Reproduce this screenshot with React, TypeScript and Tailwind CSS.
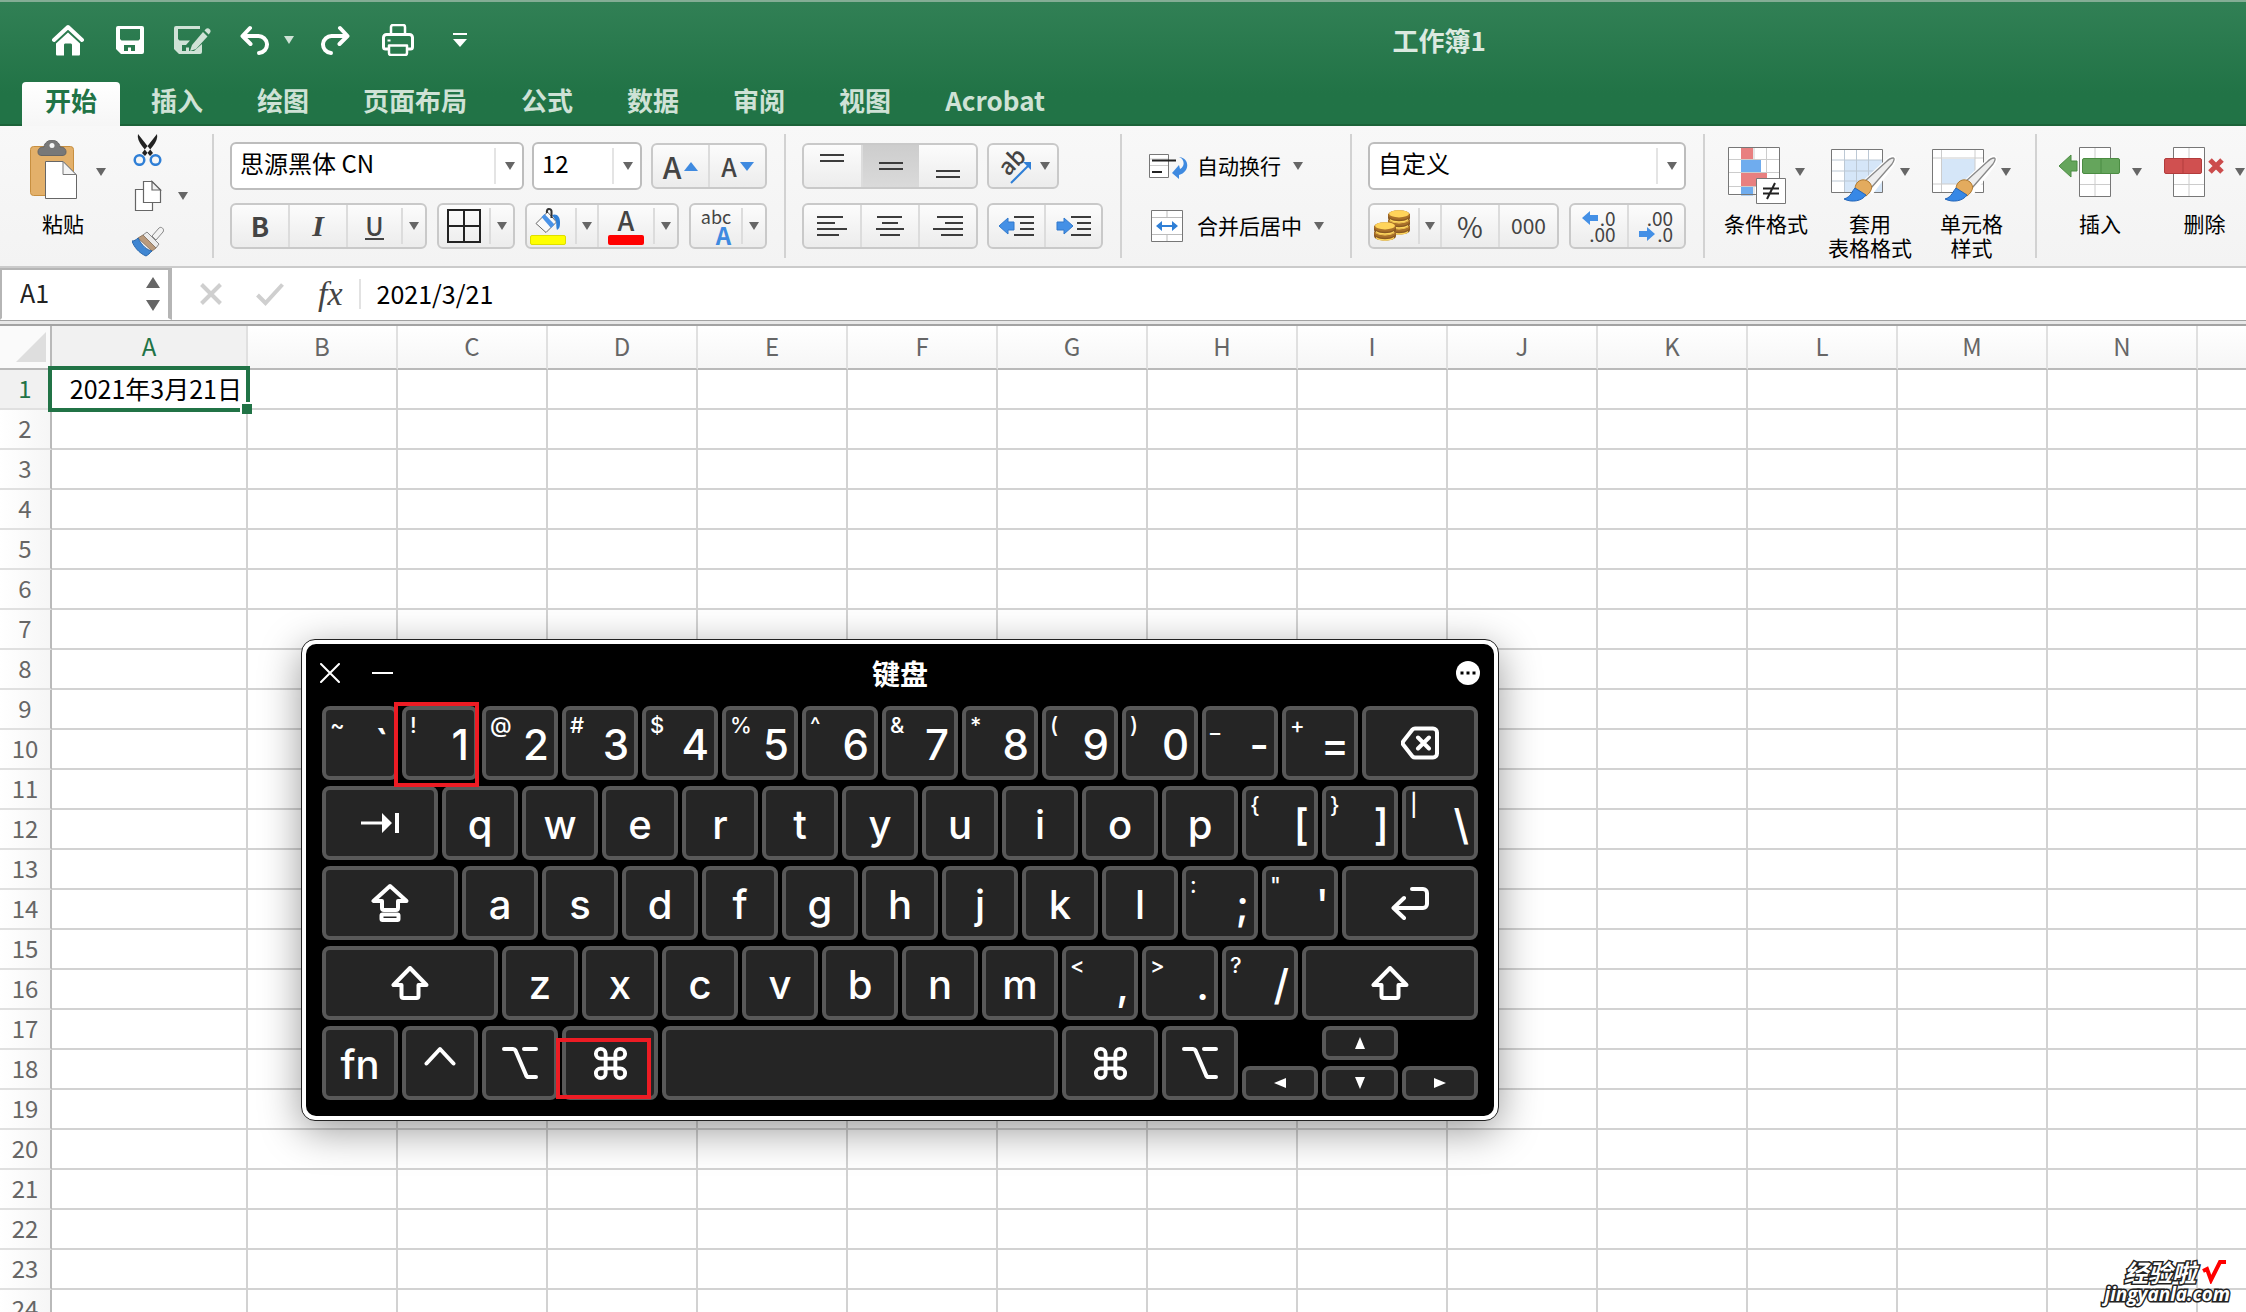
import type { ReactNode } from 'react'
import { Command } from 'lucide-react'
import clsx from 'clsx'

const COLUMNS = ['A', 'B', 'C', 'D', 'E', 'F', 'G', 'H', 'I', 'J', 'K', 'L', 'M', 'N', 'O']
const ROWS = Array.from({ length: 24 }, (_, i) => i + 1)
const TABS = ['开始', '插入', '绘图', '页面布局', '公式', '数据', '审阅', '视图', 'Acrobat']

/* ---------- small shared pieces ---------- */

const Caret = ({ className = 'text-[#666]' }: { className?: string }) => (
  <svg width="10" height="8" viewBox="0 0 10 8" className={clsx('shrink-0', className)} aria-hidden="true">
    <path d="M0 0h10L5 8z" fill="currentColor" />
  </svg>
)

const Separator = () => <span className="my-2 w-[2px] shrink-0 bg-[#d2d2d2]" />

const ButtonGroup = ({ className, children }: { className: string; children: ReactNode }) => (
  <div
    className={clsx(
      'flex h-[46px] shrink-0 rounded-md border-2 border-[#c9c9c9] bg-linear-to-b from-[#fcfcfc] to-[#ececec]',
      className,
    )}
  >
    {children}
  </div>
)

type ToolProps = { label: string; className?: string; divided?: boolean; children: ReactNode }

const Tool = ({ label, className = 'flex-1', divided, children }: ToolProps) => (
  <button
    aria-label={label}
    className={clsx(
      'flex h-full items-center justify-center text-[#444]',
      divided && 'border-r-2 border-[#dcdcdc]',
      className,
    )}
  >
    {children}
  </button>
)

// Narrow arrow part of a split button
const MenuArrow = ({ label, divided }: { label: string; divided?: boolean }) => (
  <button
    aria-label={label}
    className={clsx('flex h-full w-6 shrink-0 items-center', divided && 'border-r-2 border-[#dcdcdc]')}
  >
    <span className="flex h-9 w-full items-center justify-center border-l-2 border-[#dcdcdc]">
      <Caret />
    </span>
  </button>
)

const Picker = ({ label, value, className }: { label: string; value: string; className: string }) => (
  <div className={clsx('relative h-12 shrink-0', className)}>
    <select
      aria-label={label}
      defaultValue={value}
      className="h-full w-full appearance-none rounded-md border-2 border-[#bdbdbd] bg-white pb-[6px] pl-2 text-2xl text-black"
    >
      <option>{value}</option>
    </select>
    <span className="pointer-events-none absolute inset-y-[6px] right-0 flex w-[30px] items-center justify-center border-l-2 border-[#e4e4e4]">
      <Caret />
    </span>
  </div>
)

const BigTool = ({ lines, icon }: { lines: string[]; icon: ReactNode }) => (
  <button className="flex shrink-0 flex-col items-center pt-[14px] text-[21px] leading-6 text-black">
    <span className="flex items-center gap-2">
      {icon}
      <Caret />
    </span>
    <span className="mt-[7px] block">
      {lines.map((line) => (
        <span key={line} className="block whitespace-nowrap">
          {line}
        </span>
      ))}
    </span>
  </button>
)

/* ---------- title bar ---------- */

const QuickAccess = () => (
  <div className="flex w-[62%] items-center pl-[52px]">
    <button aria-label="主页">
      <svg width="32" height="32" viewBox="0 0 32 32" fill="none">
        <path d="M2 16L16 3l14 13" stroke="#fff" strokeWidth="4" strokeLinecap="round" strokeLinejoin="round" />
        <path d="M4 19.500L16 8.500l12 11V30c0 1-.5 1.500-1.500 1.500H20V21c0-1-.7-1.500-1.500-1.500h-5c-.8 0-1.500.5-1.500 1.500v10.500H5.500C4.500 31.500 4 31 4 30z" fill="#fff" />
      </svg>
    </button>
    <button aria-label="保存" className="ml-8">
      <svg width="28" height="28" viewBox="0 0 28 28">
        <path fillRule="evenodd" d="M2 0h24a2 2 0 0 1 2 2v24a2 2 0 0 1-2 2H5l-5-5V2a2 2 0 0 1 2-2zm2 3v10l1.500 1.500h17L24 13V3zm4 16v6h4v-3.500h3V25h4v-6z" fill="#fff" />
      </svg>
    </button>
    <button aria-label="另存为" className="ml-[30px]">
      <svg width="37" height="28" viewBox="0 0 37 28" className="text-[#cfe2d6]">
        <path fillRule="evenodd" d="M2 0h24v3H4v10l1.500 1.500H16L12 19H8v6h4v-3.500h3V25h5l8-7v8a2 2 0 0 1-2 2H5l-5-5V2a2 2 0 0 1 2-2z" fill="currentColor" />
        <path d="M18 19L29 6l4.500 4.500L22 23l-6 2z" fill="currentColor" />
        <path d="M30.500 4.500l1.500-1.700c2.500-2 6 1.500 4 4L34.700 8.500z" fill="currentColor" />
      </svg>
    </button>
    <button aria-label="撤消" className="ml-[29px]">
      <svg width="30" height="30" viewBox="0 0 30 30" fill="none" stroke="#fff" strokeWidth="4" strokeLinecap="round" strokeLinejoin="round">
        <path d="M10 3L2.500 11l8 8M3 11h15a8.500 8.500 0 0 1 1 17" />
      </svg>
    </button>
    <button aria-label="撤消选项" className="ml-[14px]">
      <Caret className="text-[#cfe2d6]" />
    </button>
    <button aria-label="恢复" className="ml-[26px]">
      <svg width="30" height="30" viewBox="0 0 30 30" fill="none" stroke="#fff" strokeWidth="4" strokeLinecap="round" strokeLinejoin="round">
        <path d="M20 3l7.500 8-8 8M27 11H12a8.500 8.500 0 0 0-1 17" />
      </svg>
    </button>
    <button aria-label="打印" className="ml-8">
      <svg width="32" height="32" viewBox="0 0 32 32" fill="none" stroke="#fff" strokeLinejoin="round">
        <path d="M9 11V3a2 2 0 0 1 2-2h10a2 2 0 0 1 2 2v8" strokeWidth="2.500" />
        <path d="M6 25H3.500A2 2 0 0 1 1.500 23V13.500a3 3 0 0 1 3-3h23a3 3 0 0 1 3 3V23a2 2 0 0 1-2 2H26" strokeWidth="3" />
        <path d="M7 21.500h18V29a2 2 0 0 1-2 2H9a2 2 0 0 1-2-2z" strokeWidth="2.500" />
        <path d="M5.500 15.500h3v2h-3z" fill="#fff" stroke="none" />
      </svg>
    </button>
    <button aria-label="自定义快速访问工具栏" className="ml-[39px]">
      <svg width="14" height="14" viewBox="0 0 14 14" fill="#fff">
        <path d="M0 0h14v2H0zM0 6h14l-7 8z" />
      </svg>
    </button>
  </div>
)

const TitleBar = () => (
  <header className="shrink-0 border-t-2 border-b-2 border-t-[#84ad95] border-b-[#1c6339] bg-linear-to-b from-[#318055] via-[#217346] via-75% to-[#217346]">
    <div className="flex h-[76px] items-center">
      <QuickAccess />
      <h1 className="text-[26px] leading-8 font-bold text-[#dbe9e0]">工作簿1</h1>
    </div>
    <nav className="mt-1 -mb-[2px] flex gap-2 pl-[22px]">
      {TABS.map((tab, i) => (
        <button
          key={tab}
          className={clsx(
            'h-11 rounded-t px-[23px] pb-2 text-[26px] leading-9 font-bold whitespace-nowrap',
            i === 0 ? 'bg-linear-to-b from-white to-[#f6f6f6] text-[#217346]' : 'text-[#cfe2d6]',
          )}
        >
          {tab}
        </button>
      ))}
    </nav>
  </header>
)

/* ---------- ribbon icons ---------- */

const PasteIcon = () => (
  <svg width="68" height="64" viewBox="0 0 68 64">
    <rect x="10.500" y="6.500" width="43" height="49" rx="3" fill="#e3b06a" stroke="#c78f40" />
    <path d="M18 12c0-4 3-5 6-5 1-9 15-9 16 0 3 0 6 1 6 5 0 3-2 3.500-4 3.500H22c-2 0-4-.5-4-3.500z" fill="#787878" stroke="#666" />
    <circle cx="32" cy="5.500" r="2.500" fill="#f5f5f5" />
    <path d="M25.500 21.500H43L56.500 35v23.500h-31z" fill="#fff" stroke="#666" />
    <path d="M43 21.500V34.500h13z" fill="#f4f4f4" stroke="#777" />
  </svg>
)

const CutIcon = () => (
  <svg width="32" height="32" viewBox="0 0 32 32" fill="none">
    <path d="M6 0c-1 4 1 8 4 12l8 10 3-3zM25 0c1 4-1 8-4 12l-8 10-3-3z" fill="#222" />
    <ellipse cx="7.500" cy="26" rx="4.800" ry="4.800" stroke="#2f7fd6" strokeWidth="2.500" />
    <ellipse cx="23.500" cy="26" rx="4.800" ry="4.800" stroke="#2f7fd6" strokeWidth="2.500" />
  </svg>
)

const CopyIcon = () => (
  <svg width="32" height="32" viewBox="0 0 32 32" fill="#fff" stroke="#666" strokeWidth="1.200">
    <path d="M3.500 9.500h17v21h-17z" />
    <path d="M11.500 1.500H20L28.500 10v12.500h-17z" />
    <path d="M20 1.500V10h8.500z" fill="#f1f1f1" />
  </svg>
)

const FormatPainterIcon = () => (
  <svg width="32" height="32" viewBox="0 0 32 32">
    <path d="M20 10l7-8c2-2 6 1 4 4l-7 8z" fill="#f2f2f2" stroke="#888" />
    <path d="M11 9l4-3 12 12-3 4z" fill="#ececec" stroke="#888" />
    <path d="M11 9l13 13-4 3L6 12z" fill="#b99a7c" stroke="#8f7a66" />
    <path d="M6 12c-2 2-4 3-6 3 2 6 7 12 14 15 2-1 4-3 6-5-5-1-10-5-14-13z" fill="#3f86d2" stroke="#2a67ab" />
  </svg>
)

const BordersIcon = () => (
  <svg width="34" height="34" viewBox="0 0 34 34" fill="none" stroke="#222" strokeWidth="2">
    <path d="M1 1h32v32H1zM17 1v32M1 17h32" />
  </svg>
)

const FillIcon = () => (
  <svg width="36" height="38" viewBox="0 0 36 38">
    <path d="M6 16.500L17.500 5 26.500 15 16 25.500z" fill="#fafafa" stroke="#666" />
    <path d="M11.500 10l3-3 10 10.500-3.500 3.500z" fill="#4a93e8" />
    <path d="M22 8c5-2 8 2 8 7 0 4 0 6-3 8-1-3-.5-6-1-9z" fill="#2f7fd6" />
    <path d="M17 6c-1-5 4-5 4.500-2v7" fill="none" stroke="#333" strokeWidth="2" />
    <rect x=".5" y="28.500" width="35" height="9" rx="1.500" fill="#ff0" stroke="#dede00" />
  </svg>
)

const FontColorIcon = () => (
  <span className="flex flex-col items-center">
    <span className="h-7 text-[27px] leading-[25px] font-medium">A</span>
    <span className="h-[10px] w-9 rounded-xs bg-[#f00]" />
  </span>
)

type Line = [x: number, width: number]

const LinesIcon = ({ lines, top = 0 }: { lines: Line[]; top?: number }) => (
  <svg width="30" height="32" viewBox="0 0 30 32" fill="#3c3c3c">
    {lines.map(([x, width], i) => (
      <rect key={i} x={x} y={top + i * 6} width={width} height="2" />
    ))}
  </svg>
)

const OrientationIcon = () => (
  <svg width="36" height="36" viewBox="0 0 36 36" className="overflow-visible text-[#444]">
    <text x="11" y="29" transform="rotate(-45 11 29)" fontSize="23" fontWeight="500" fill="currentColor">
      ab
    </text>
    <path d="M14 35L31 18" stroke="#2f7fd6" strokeWidth="2" />
    <path d="M26 14h8v8z" fill="#2f7fd6" />
  </svg>
)

const IndentIcon = ({ out }: { out?: boolean }) => (
  <svg width="36" height="24" viewBox="0 0 36 24" fill="#3c3c3c">
    <path d="M15 2h20v2H15zM21 8h14v2H21zM21 14h14v2H21zM15 20h20v2H15z" />
    <path d={out ? 'M0 12l9-8v4h6v8H9v4z' : 'M17 12L8 4v4H1v8h7v4z'} fill="#4490e6" stroke="#3079cc" />
  </svg>
)

const WrapIcon = () => (
  <svg width="40" height="28" viewBox="0 0 40 28" fill="none">
    <path d="M.5 2.500h19v23H.5z" fill="#fff" stroke="#777" />
    <path d="M1 13.500h18M1 7h18" stroke="#ccc" />
    <path d="M3 8.500h24M3 20h10" stroke="#222" strokeWidth="2" />
    <path d="M30 5c6 2 6 10 1 12l-1-4-7 8 7 6v-4c11-3 11-17 0-18z" fill="#3f8ae0" />
  </svg>
)

const MergeIcon = () => (
  <svg width="40" height="32" viewBox="0 0 40 32" fill="none">
    <path d="M2.500.5h31v31h-31z" fill="#fff" stroke="#777" />
    <path d="M3 7.500h30M3 24.500h30M18 1v6M18 25v6" stroke="#bbb" />
    <path d="M11 16h14" stroke="#2f7fd6" strokeWidth="2" />
    <path d="M13 11v10l-6-5zM23 11v10l6-5z" fill="#2f7fd6" />
  </svg>
)

const Coin = ({ x, y }: { x: number; y: number }) => (
  <g transform={`translate(${x} ${y})`}>
    <path d="M0 4v4c0 6 22 6 22 0V4z" fill="#8a5a22" />
    <path d="M2 9c4 3 14 3 18 0v1.500c-4 3-14 3-18 0z" fill="#ffd75e" />
    <ellipse cx="11" cy="5" rx="11" ry="4.800" fill="#a9702a" />
    <ellipse cx="11" cy="3.800" rx="10" ry="3.600" fill="#ffd45a" />
  </g>
)

const CoinsIcon = () => (
  <svg width="38" height="32" viewBox="0 0 38 32">
    <Coin x={15} y={12} />
    <Coin x={15} y={6} />
    <Coin x={15} y={0} />
    <Coin x={1} y={18} />
    <Coin x={1} y={12} />
  </svg>
)

const SmallArrow = ({ right }: { right?: boolean }) => (
  <svg width="16" height="14" viewBox="0 0 16 14" className={right ? 'rotate-180' : undefined}>
    <path d="M0 7l8-7v4h8v6H8v4z" fill="#4490e6" />
  </svg>
)

const ConditionalIcon = () => (
  <svg width="59" height="64" viewBox="0 0 59 64" fill="none">
    <path d="M.5 7.500h51v53H.5z" fill="#fff" />
    <path d="M1 19.500h50M1 32.500h50M1 46.500h50M13.500 8v52M26 8v52M38.500 8v52" stroke="#ccc" />
    <path d="M13 8h12v11H13zM13 33h26v13H13z" fill="#e88080" />
    <path d="M13 20h20v12H13zM13 47h12v13H13z" fill="#6facee" />
    <path d="M.5 7.500h51v47H.5z" stroke="#777" />
    <path d="M0 55.500h28V64H0z" fill="#f5f5f5" />
    <path d="M28.500 38.500h29v25h-29z" fill="#fff" stroke="#777" />
    <path d="M35 48.500h16M35 53.500h16M47 43l-8 16" stroke="#222" strokeWidth="2" />
  </svg>
)

const Brush = () => (
  <g>
    <path d="M60 18c4-1 3 3 1 6L41 51l-9-7z" fill="#ececec" stroke="#fff" strokeWidth="5" />
    <path d="M62 18c2 0 1 3-1 6L40 48l-7-6 22-20c3-3 5-4 7-4z" fill="#eee" stroke="#888" strokeWidth="1.300" />
    <path d="M24 49c0-8 8-12 14-7 5 5 2 10-3 14z" fill="#e3ab5e" stroke="#b07a30" />
    <path d="M24 48c-3 3-4 9-11 11 8 4 18 2 22-4z" fill="#3788e6" stroke="#2566b8" />
  </g>
)

const TableFormatIcon = ({ single }: { single?: boolean }) => (
  <svg width="61" height="64" viewBox="0 0 61 64" fill="none" className="overflow-visible">
    <path d="M.5 9.500h51v43H.5z" fill="#fff" />
    {single ? (
      <>
        <path d="M10 19h33v25H10z" fill="#d5e6f8" />
        <path d="M1 18h50M1 44h50M9.500 10v42M43 10v42" stroke="#ccc" />
      </>
    ) : (
      <>
        <path d="M13 20h38v32H13z" fill="#d5e6f8" />
        <path d="M1 20h50M1 31h50M1 41h50M13.500 10v42M25.500 10v42M37.500 10v42" stroke="#bcc8d4" />
      </>
    )}
    <path d="M.5 9.500h51v43H.5z" stroke="#777" />
    <Brush />
  </svg>
)

const InsertCellsIcon = () => (
  <svg width="66" height="64" viewBox="0 0 66 64" fill="none">
    <path d="M21.500 7.500h31v49h-31z" fill="#fff" stroke="#777" />
    <path d="M37 8v48M22 44.500h30" stroke="#ccc" />
    <rect x="24.500" y="18.500" width="37" height="15" rx="1.500" fill="#65a55c" stroke="#4b8c42" />
    <path d="M43 19v14" stroke="#4b8c42" />
    <path d="M1 26l12-11v6h6v10h-6v6z" fill="#65a55c" stroke="#4b8c42" />
  </svg>
)

const DeleteCellsIcon = () => (
  <svg width="63" height="64" viewBox="0 0 63 64" fill="none">
    <path d="M9.500 7.500h31v49h-31z" fill="#fff" stroke="#777" />
    <path d="M25 8v48M10 44.500h30" stroke="#ccc" />
    <rect x=".5" y="18.500" width="37" height="15" rx="1.500" fill="#d05050" stroke="#b23c3c" />
    <path d="M19 19v14" stroke="#b23c3c" />
    <path d="M46 20l12 12M58 20L46 32" stroke="#cc4c4c" strokeWidth="5" />
  </svg>
)

/* ---------- ribbon ---------- */

const GROUP = 'flex shrink-0 flex-col gap-[13px] py-4 pr-[17px] pl-4'

const Ribbon = () => (
  <section aria-label="功能区" className="flex h-[142px] shrink-0 overflow-hidden border-b-2 border-[#cbcbcb] bg-linear-to-b from-[#f8f8f8] to-[#f3f3f3]">
    <div className="flex shrink-0 items-start pr-6 pl-5">
      <BigTool lines={['粘贴']} icon={<PasteIcon />} />
      <div className="ml-[26px] flex flex-col items-start gap-[14px] py-2">
        <button aria-label="剪切">
          <CutIcon />
        </button>
        <button aria-label="复制" className="flex items-center gap-[14px]">
          <CopyIcon />
          <Caret />
        </button>
        <button aria-label="格式刷">
          <FormatPainterIcon />
        </button>
      </div>
    </div>
    <Separator />

    <div className={GROUP}>
      <div className="flex items-center">
        <Picker label="字体" value="思源黑体 CN" className="mr-2 w-[294px]" />
        <Picker label="字号" value="12" className="mr-[9px] w-[110px]" />
        <ButtonGroup className="w-[116px]">
          <Tool label="增大字号" divided>
            <span className="text-[30px] leading-8 font-medium">A</span>
            <svg width="14" height="9" viewBox="0 0 14 9" className="ml-[3px]">
              <path d="M0 9h14L7 0z" fill="#3f8ae0" />
            </svg>
          </Tool>
          <Tool label="减小字号">
            <span className="text-[25px] leading-8 font-medium">A</span>
            <svg width="14" height="9" viewBox="0 0 14 9" className="ml-[3px]">
              <path d="M0 0h14L7 9z" fill="#3f8ae0" />
            </svg>
          </Tool>
        </ButtonGroup>
      </div>
      <div className="flex gap-[10px]">
        <ButtonGroup className="w-[197px]">
          <Tool label="加粗" divided className="w-[58px]">
            <span className="text-[27px] leading-8 font-bold">B</span>
          </Tool>
          <Tool label="倾斜" divided className="w-[58px]">
            <span className="font-['Liberation_Serif',serif] text-[30px] leading-8 font-bold italic">I</span>
          </Tool>
          <Tool label="下划线">
            <span className="border-b-2 border-[#444] text-[25px] leading-[26px] font-medium">U</span>
          </Tool>
          <MenuArrow label="下划线选项" />
        </ButtonGroup>
        <ButtonGroup className="w-[78px]">
          <Tool label="边框">
            <BordersIcon />
          </Tool>
          <MenuArrow label="边框选项" />
        </ButtonGroup>
        <ButtonGroup className="w-[154px]">
          <Tool label="填充颜色" className="w-12 pr-[6px]">
            <FillIcon />
          </Tool>
          <MenuArrow label="填充颜色选项" divided />
          <Tool label="字体颜色">
            <FontColorIcon />
          </Tool>
          <MenuArrow label="字体颜色选项" />
        </ButtonGroup>
        <ButtonGroup className="w-[78px]">
          <Tool label="拼音指南">
            <span className="flex flex-col">
              <span className="text-[18px] leading-[17px]">abc</span>
              <span className="self-end text-2xl leading-5 font-bold text-[#3f8ae0]">A</span>
            </span>
          </Tool>
          <MenuArrow label="拼音指南选项" />
        </ButtonGroup>
      </div>
    </div>
    <Separator />

    <div className={GROUP}>
      <div className="flex h-12 items-center gap-[9px]">
        <ButtonGroup className="w-[176px]">
          <Tool label="顶端对齐" divided>
            <LinesIcon lines={[[3, 24], [3, 24]]} top={4} />
          </Tool>
          <Tool label="垂直居中" className="flex-1 bg-linear-to-b from-[#cdcdcd] to-[#dadada]">
            <LinesIcon lines={[[3, 24], [3, 24]]} top={12} />
          </Tool>
          <Tool label="底端对齐">
            <LinesIcon lines={[[3, 24], [3, 24]]} top={20} />
          </Tool>
        </ButtonGroup>
        <ButtonGroup className="w-[72px]">
          <Tool label="方向" className="flex-1 gap-[7px]">
            <OrientationIcon />
            <Caret />
          </Tool>
        </ButtonGroup>
      </div>
      <div className="flex gap-[9px]">
        <ButtonGroup className="w-[176px]">
          <Tool label="左对齐" divided>
            <LinesIcon lines={[[0, 26], [0, 18], [0, 30], [0, 22]]} top={6} />
          </Tool>
          <Tool label="居中" divided>
            <LinesIcon lines={[[2, 25], [7, 16], [1, 28], [5, 20]]} top={6} />
          </Tool>
          <Tool label="右对齐">
            <LinesIcon lines={[[4, 26], [12, 18], [0, 30], [8, 22]]} top={6} />
          </Tool>
        </ButtonGroup>
        <ButtonGroup className="w-[116px]">
          <Tool label="减少缩进量" divided>
            <IndentIcon out />
          </Tool>
          <Tool label="增加缩进量">
            <IndentIcon />
          </Tool>
        </ButtonGroup>
      </div>
    </div>
    <Separator />

    <div className="flex shrink-0 flex-col gap-[13px] py-4 pr-[26px] pl-[27px] text-[21px] text-black">
      <button className="flex h-12 items-center">
        <WrapIcon />
        <span className="mr-3 ml-2">自动换行</span>
        <Caret />
      </button>
      <button className="flex h-[46px] items-center">
        <MergeIcon />
        <span className="mr-3 ml-2">合并后居中</span>
        <Caret />
      </button>
    </div>
    <Separator />

    <div className={GROUP}>
      <Picker label="数字格式" value="自定义" className="w-[318px]" />
      <div className="flex gap-[10px]">
        <ButtonGroup className="w-[191px]">
          <Tool label="会计数字格式" className="flex-1 pr-1">
            <CoinsIcon />
          </Tool>
          <MenuArrow label="会计数字格式选项" divided />
          <Tool label="百分比样式" divided className="w-[58px]">
            <span className="text-[28px]">%</span>
          </Tool>
          <Tool label="千位分隔样式" className="w-[57px]">
            <span className="text-[21px]">000</span>
          </Tool>
        </ButtonGroup>
        <ButtonGroup className="w-[117px] text-[19px] leading-4">
          <Tool label="增加小数位数" divided>
            <span className="flex flex-col items-end">
              <span className="flex items-center gap-[2px]">
                <SmallArrow />
                .0
              </span>
              .00
            </span>
          </Tool>
          <Tool label="减少小数位数">
            <span className="flex flex-col items-end">
              .00
              <span className="flex items-center gap-[2px]">
                <SmallArrow right />
                .0
              </span>
            </span>
          </Tool>
        </ButtonGroup>
      </div>
    </div>
    <Separator />

    <div className="flex shrink-0 items-start gap-5 pr-6 pl-[19px]">
      <BigTool lines={['条件格式']} icon={<ConditionalIcon />} />
      <BigTool lines={['套用', '表格格式']} icon={<TableFormatIcon />} />
      <BigTool lines={['单元格', '样式']} icon={<TableFormatIcon single />} />
    </div>
    <Separator />

    <div className="flex shrink-0 items-start gap-[22px] pl-[21px]">
      <BigTool lines={['插入']} icon={<InsertCellsIcon />} />
      <BigTool lines={['删除']} icon={<DeleteCellsIcon />} />
    </div>
  </section>
)

/* ---------- formula bar ---------- */

const FormulaBar = () => (
  <section aria-label="编辑栏" className="flex h-[58px] shrink-0 flex-col bg-white">
    <div className="flex h-[52px] items-center">
      <div className="flex h-full w-[172px] shrink-0 items-center border-2 border-r-4 border-[#b5b5b5] border-b-white">
        <input aria-label="名称框" defaultValue="A1" className="w-36 pb-[2px] pl-[18px] text-[25px] text-[#222] outline-none" />
        <svg width="14" height="34" viewBox="0 0 14 34" fill="#666">
          <path d="M7 0l7 11H0zM0 23h14L7 34z" />
        </svg>
      </div>
      <button aria-label="取消" className="ml-7">
        <svg width="22" height="24" viewBox="0 0 22 24" stroke="#cfcfcf" strokeWidth="4">
          <path d="M1.500 2.500l19 19M20.500 2.500l-19 19" />
        </svg>
      </button>
      <button aria-label="输入" className="ml-[34px]">
        <svg width="28" height="24" viewBox="0 0 28 24" fill="none" stroke="#cfcfcf" strokeWidth="4">
          <path d="M1.500 13l8 8L26.500 2.500" />
        </svg>
      </button>
      <button aria-label="插入函数" className="ml-[34px] font-['Liberation_Serif',serif] text-[34px] leading-9 text-[#444] italic">
        fx
      </button>
      <span className="ml-4 h-[30px] w-[2px] bg-[#e2e2e2]" />
      <input aria-label="编辑栏内容" defaultValue="2021/3/21" className="ml-4 min-w-0 flex-1 text-[25px] text-black outline-none" />
    </div>
    <div className="h-[6px] border-t border-b-2 border-[#a3a3a3] bg-[#e8e8e8]" />
  </section>
)

/* ---------- sheet ---------- */

const Sheet = () => (
  <table className="w-[2348px] table-fixed border-separate border-spacing-0 text-2xl leading-7">
    <colgroup>
      <col className="w-[52px]" />
      {COLUMNS.map((name, i) => (
        <col key={name} className={i === 0 ? 'w-[196px]' : 'w-[150px]'} />
      ))}
    </colgroup>
    <thead>
      <tr className="h-11">
        <th className="border-r-2 border-b-2 border-[#b9b9b9] bg-[#fafafa] p-0" aria-label="全选">
          <svg width="30" height="30" viewBox="0 0 30 30" className="ml-4">
            <path d="M30 0v30H0z" fill="#dedede" />
          </svg>
        </th>
        {COLUMNS.map((name, i) => (
          <th
            key={name}
            scope="col"
            className={clsx(
              'border-r-2 border-b-2 border-r-[#e0e0e0] border-b-[#b9b9b9] p-0 pb-[2px] font-normal',
              i === 0 ? 'bg-[#f1f1f1] text-[#217346]' : 'bg-linear-to-b from-white to-[#f6f6f6] text-[#666]',
            )}
          >
            {name}
          </th>
        ))}
      </tr>
    </thead>
    <tbody>
      {ROWS.map((row) => (
        <tr key={row} className="h-10">
          <th
            scope="row"
            className={clsx(
              'border-r-2 border-b-2 border-r-[#b9b9b9] border-b-[#e0e0e0] p-0 pb-[2px] font-normal',
              row === 1 ? 'bg-[#f1f1f1] text-[#217346]' : 'bg-linear-to-r from-white to-[#f6f6f6] text-[#666]',
            )}
          >
            {row}
          </th>
          {COLUMNS.map((name) =>
            name === 'A' && row === 1 ? (
              <td key={name} className="relative border-r-2 border-b-2 border-[#d2d2d2] p-0 pr-1 pb-[2px] text-right text-[25px] whitespace-nowrap text-black">
                2021年3月21日
                <span className="absolute -inset-1 border-4 border-[#217346]" />
                <span className="absolute -right-[6px] -bottom-[6px] size-3 border-t-2 border-l-2 border-white bg-[#217346]" />
              </td>
            ) : (
              <td key={name} className="border-r-2 border-b-2 border-[#d2d2d2] p-0" />
            ),
          )}
        </tr>
      ))}
    </tbody>
  </table>
)

/* ---------- on-screen keyboard ---------- */

const KEY = 'flex shrink-0 items-center justify-center rounded-lg border-4 border-[#595959] bg-[#252525] font-medium text-white'

const Key = ({ label, className = 'h-[74px] w-[76px]', children }: { label?: string; className?: string; children?: ReactNode }) => (
  <button aria-label={label} className={clsx(KEY, 'text-[40px] leading-none', className)}>
    {children}
  </button>
)

const LetterKey = ({ children }: { children: string }) => (
  <button className={clsx(KEY, 'h-[74px] w-[76px] pt-[3px] text-[40px] leading-none')}>{children}</button>
)

// Key with a shifted symbol in its top left corner
const DualKey = ({ shifted, base }: { shifted: string; base: string }) => (
  <button className={clsx(KEY, 'relative h-[74px] w-[76px] pt-[3px]')}>
    <span className="ml-1 self-start text-[22px] leading-6">{shifted}</span>
    <span className="mr-[5px] ml-auto text-[42px] leading-none">{base}</span>
  </button>
)

const KeyRow = ({ children }: { children: ReactNode }) => <div className="flex gap-1">{children}</div>

const letters = (row: string) => row.split('').map((letter) => <LetterKey key={letter}>{letter}</LetterKey>)

const dual = (pairs: string[]) => pairs.map((pair) => <DualKey key={pair} shifted={pair[0]} base={pair[1]} />)

const Glyph = ({ width, height, children }: { width: number; height: number; children: ReactNode }) => (
  <svg
    width={width}
    height={height}
    viewBox={`0 0 ${width} ${height}`}
    fill="none"
    stroke="currentColor"
    strokeWidth="4"
    strokeLinecap="round"
    strokeLinejoin="round"
  >
    {children}
  </svg>
)

const ShiftGlyph = () => (
  <Glyph width={38} height={34}>
    <path d="M19 2L2.500 19H10.500v11a2 2 0 0 0 2 2h13a2 2 0 0 0 2-2V19h8z" />
  </Glyph>
)

const OptionGlyph = () => (
  <Glyph width={36} height={34}>
    <path d="M2 3h9c1 0 2 .5 2.500 1.500L24 29c.5 1.500 1 2 2.500 2H34M22 3h12" />
  </Glyph>
)

const ArrowGlyph = ({ className }: { className?: string }) => (
  <svg width="12" height="12" viewBox="0 0 12 12" className={className}>
    <path d="M6 0l5 12H1z" fill="currentColor" />
  </svg>
)

const Keyboard = () => (
  <section
    aria-label="键盘"
    className="absolute top-[639px] left-[301px] rounded-[14px] border border-[#222] bg-white p-1 font-['Inter',sans-serif] shadow-[0_10px_40px_rgba(0,0,0,0.4)]"
  >
    <div className="relative flex flex-col gap-[6px] rounded-[10px] bg-black px-4 pb-4">
      <div className="-mx-[2px] flex h-14 items-center pt-[2px] text-white">
        <div className="flex flex-1 items-center gap-8">
          <button aria-label="关闭">
            <svg width="20" height="20" viewBox="0 0 20 20" stroke="currentColor" strokeWidth="2" strokeLinecap="round">
              <path d="M1 1l18 18M19 1L1 19" />
            </svg>
          </button>
          <button aria-label="最小化">
            <svg width="21" height="20" viewBox="0 0 21 20" fill="currentColor">
              <path d="M0 9h21v2H0z" />
            </svg>
          </button>
        </div>
        <h2 className="font-['Noto_Sans_CJK_SC',sans-serif] text-[28px] leading-9 font-bold">键盘</h2>
        <div className="flex flex-1 justify-end">
          <button aria-label="更多">
            <svg width="24" height="24" viewBox="0 0 24 24">
              <circle cx="12" cy="12" r="12" fill="#fff" />
              <path d="M4.500 10.500h3v3h-3zM10.500 10.500h3v3h-3zM16.500 10.500h3v3h-3z" fill="#000" />
            </svg>
          </button>
        </div>
      </div>

      <KeyRow>
        {dual(['~`', '!1', '@2', '#3', '$4', '%5', '^6', '&7', '*8', '(9', ')0', '_-', '+='])}
        <Key label="退格" className="h-[74px] w-[116px]">
          <Glyph width={38} height={34}>
            <path d="M14 2.500h18a4 4 0 0 1 4 4v21a4 4 0 0 1-4 4H14c-1 0-2-.5-2.500-1L2.500 19c-1-1.300-1-2.700 0-4l9-11.500c.5-.6 1.500-1 2.500-1zM17 11.500l11 11M28 11.500l-11 11" />
          </Glyph>
        </Key>
      </KeyRow>
      <KeyRow>
        <Key label="制表" className="h-[74px] w-[116px]">
          <svg width="38" height="22" viewBox="0 0 38 22" fill="#fff">
            <path d="M0 9.500h21V1l10 10-10 10v-8.500H0zM34 1h4v20h-4z" />
          </svg>
        </Key>
        {letters('qwertyuiop')}
        {dual(['{[', '}]', '|\\'])}
      </KeyRow>
      <KeyRow>
        <Key label="大写锁定" className="h-[74px] w-[136px]">
          <Glyph width={38} height={40}>
            <path d="M19 3L2.500 18H11v7a2 2 0 0 0 2 2h12a2 2 0 0 0 2-2v-7h8.500zM11.500 31.500h15a1 1 0 0 1 1 1V36a1 1 0 0 1-1 1h-15a1 1 0 0 1-1-1v-3.500a1 1 0 0 1 1-1z" />
          </Glyph>
        </Key>
        {letters('asdfghjkl')}
        {dual([':;', '"\''])}
        <Key label="回车" className="h-[74px] w-[136px]">
          <Glyph width={38} height={34}>
            <path d="M21 3h11a4 4 0 0 1 4 4v11a4 4 0 0 1-4 4H3M13 12L2.500 22 13 32" />
          </Glyph>
        </Key>
      </KeyRow>
      <KeyRow>
        <Key label="左上档" className="h-[74px] w-[176px]">
          <ShiftGlyph />
        </Key>
        {letters('zxcvbnm')}
        {dual(['<,', '>.', '?/'])}
        <Key label="右上档" className="h-[74px] w-[176px]">
          <ShiftGlyph />
        </Key>
      </KeyRow>
      <div className="flex items-end gap-1">
        <LetterKey>fn</LetterKey>
        <Key label="Control">
          <Glyph width={32} height={34}>
            <path d="M2.500 17.500L16 3l13.500 14.500" />
          </Glyph>
        </Key>
        <Key label="左 Option">
          <OptionGlyph />
        </Key>
        <Key label="左 Command" className="h-[74px] w-24">
          <Command size={39} strokeWidth={2.4} />
        </Key>
        <Key label="空格" className="h-[74px] w-[396px]" />
        <Key label="右 Command" className="h-[74px] w-24">
          <Command size={39} strokeWidth={2.4} />
        </Key>
        <Key label="右 Option">
          <OptionGlyph />
        </Key>
        <Key label="左" className="h-[34px] w-[76px]">
          <ArrowGlyph className="-rotate-90" />
        </Key>
        <div className="flex flex-col gap-[6px]">
          <Key label="上" className="h-[34px] w-[76px]">
            <ArrowGlyph />
          </Key>
          <Key label="下" className="h-[34px] w-[76px]">
            <ArrowGlyph className="rotate-180" />
          </Key>
        </div>
        <Key label="右" className="h-[34px] w-[76px]">
          <ArrowGlyph className="rotate-90" />
        </Key>
      </div>

      {/* highlighted keys: 1 and left command */}
      <span className="pointer-events-none absolute top-[58px] left-[88px] h-[85px] w-[85px] border-4 border-[#ed1c24]" />
      <span className="pointer-events-none absolute top-[394px] left-[250px] h-[61px] w-[95px] border-4 border-[#ed1c24]" />
    </div>
  </section>
)

const Watermark = () => (
  <div className="absolute right-4 bottom-2 flex flex-col items-end font-bold text-white italic [paint-order:stroke_fill] [-webkit-text-stroke:3px_#222]">
    <span className="mr-1 flex items-center gap-[6px] text-2xl leading-6">
      经验啦
      <svg width="24" height="24" viewBox="0 0 24 24" fill="none" stroke="#f00" strokeWidth="4">
        <path d="M1 11l4-2 4 11L18 2h6" />
      </svg>
    </span>
    <span className="font-['Open_Sans',sans-serif] text-[19px] leading-5">jingyanla.com</span>
  </div>
)

export default function App() {
  return (
    <div className="relative flex h-screen flex-col overflow-hidden bg-white font-['Noto_Sans_CJK_SC',sans-serif]">
      <TitleBar />
      <Ribbon />
      <FormulaBar />
      <main className="min-h-0 flex-1 overflow-hidden">
        <Sheet />
      </main>
      <Keyboard />
      <Watermark />
    </div>
  )
}
